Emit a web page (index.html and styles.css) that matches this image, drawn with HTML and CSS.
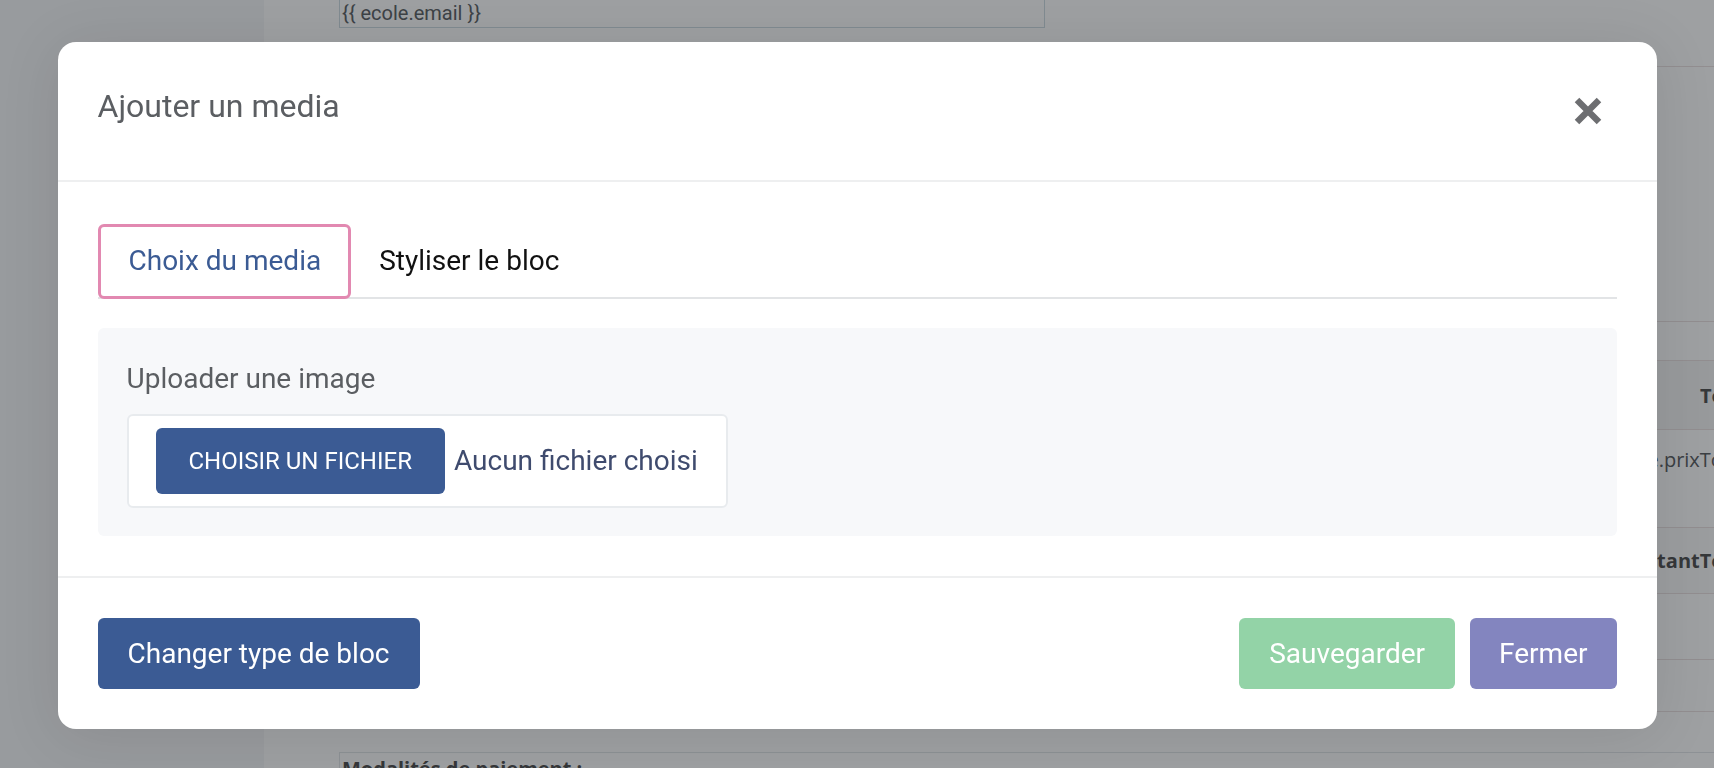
FILE: index.html
```html
<!DOCTYPE html>
<html lang="fr">
<head>
<meta charset="utf-8">
<title>Ajouter un media</title>
<link rel="stylesheet" href="styles.css">
</head>
<body>
<div class="page">
  <aside class="sidebar"></aside>
  <main class="main">
    <div class="email-field">{{ ecole.email }}</div>
    <div class="doc-table">
      <div class="row row-a"></div>
      <div class="row row-b"></div>
      <div class="row row-head"><span></span><span class="cell th">Total</span></div>
      <div class="row row-data"><span></span><span class="cell td">{{ ligne.prixTotal }}</span></div>
      <div class="row row-total"><span></span><span class="cell tb">{{ montantTotal }}</span></div>
      <div class="row row-c"></div>
      <div class="row row-d"></div>
      <div class="row row-e"></div>
    </div>
    <div class="terms-box"><strong>Modalités de paiement :</strong></div>
  </main>
</div>

<div class="backdrop">
  <div class="modal" role="dialog" aria-labelledby="modal-title">
    <div class="modal-header">
      <h5 class="modal-title" id="modal-title">Ajouter un media</h5>
      <button class="close" type="button" aria-label="Close">
        <svg width="28" height="28" viewBox="0 0 28 28" aria-hidden="true">
          <path d="M3 3 L25 25 M25 3 L3 25" stroke="currentColor" stroke-width="6.4" fill="none" stroke-linecap="butt"/>
        </svg>
      </button>
    </div>
    <div class="modal-body">
      <nav class="tabs">
        <a class="tab active">Choix du media</a>
        <a class="tab second">Styliser le bloc</a>
      </nav>
      <div class="tab-pane">
        <label class="pane-label">Uploader une image</label>
        <div class="file-input">
          <span class="file-btn">Choisir un fichier</span>
          <span class="file-name">Aucun fichier choisi</span>
        </div>
      </div>
    </div>
    <div class="modal-footer">
      <button class="btn btn-primary" type="button">Changer type de bloc</button>
      <div class="btn-group">
        <button class="btn btn-success" type="button">Sauvegarder</button>
        <button class="btn btn-close" type="button">Fermer</button>
      </div>
    </div>
  </div>
</div>
</body>
</html>
```

FILE: styles.css
```css
* { box-sizing: border-box; }

html, body {
  margin: 0;
  padding: 0;
  height: 100%;
  overflow: hidden;
}

body {
  font-family: Roboto, "Liberation Sans", Arial, sans-serif;
  background: #ffffff;
}

/* ---------- background page ---------- */
.page {
  display: flex;
  min-height: 768px;
}

.sidebar {
  width: 264px;
  flex: none;
  background: #f6f7f8;
}

.main {
  flex: 1;
  background: #ffffff;
  padding-left: 75px;
  color: #5f6366;
}

.email-field {
  width: 706px;
  height: 28px;
  border: 1px solid #cfdde3;
  border-top: none;
  font-size: 20px;
  line-height: 27px;
  padding-left: 2px;
  color: #62666a;
}

.doc-table {
  margin-top: 38px;
  font-family: "Open Sans", "Liberation Sans", sans-serif;
  font-size: 20px;
}

.row {
  display: grid;
  grid-template-columns: 1fr 220px;
  border-top: 1px solid #ebe2e2;
  white-space: nowrap;
}

.row-a { height: 255px; }
.row-b { height: 39px; }
.row-head { height: 69px; align-items: center; background: #f6f6f6; }
.row-data { height: 98px; padding-top: 16px; }
.row-total { height: 66px; align-items: center; background: #fbfbfb; }
.row-c { height: 66px; }
.row-d { height: 52px; }
.row-e { height: 41px; }

.cell { overflow: visible; }
.th { padding-left: 206px; font-weight: 700; color: #555; }
.td { padding-left: 100px; color: #5f6366; }
.tb { padding-left: 97px; font-weight: 700; color: #555; }

.terms-box {
  border-top: 1px solid #e3e7ea;
  border-left: 1px solid #e3e7ea;
  padding: 2px 0 0 2px;
  font-family: "Open Sans", "Liberation Sans", sans-serif;
  font-size: 20px;
  color: #555;
}

/* ---------- modal ---------- */
.backdrop {
  position: fixed;
  inset: 0;
  background: rgba(4, 10, 16, 0.39);
  display: flex;
  justify-content: center;
  align-items: flex-start;
  padding-top: 42px;
}

.modal {
  width: 1599px;
  background: #ffffff;
  border-radius: 18px;
  box-shadow: 0 6px 60px rgba(0, 0, 0, 0.10);
}

.modal-header {
  display: flex;
  justify-content: space-between;
  align-items: flex-start;
  padding: 40px 55px 50px 40px;
  border-bottom: 2px solid #eeeff0;
}

.modal-title {
  margin: 0;
  font-size: 32px;
  line-height: 48px;
  font-weight: 400;
  color: #5b5e62;
}

.close {
  margin-top: 15px;
  padding: 0;
  border: 0;
  background: none;
  color: #6d6e71;
  width: 28px;
  height: 28px;
  display: block;
}

.close svg { display: block; }

.modal-body {
  padding: 42px 40px 40px;
}

.tabs {
  display: flex;
  border-bottom: 2px solid #e2e4e6;
}

.tab {
  display: block;
  margin-bottom: -2px;
  padding: 13px 28px 14px;
  border: 3px solid transparent;
  border-radius: 6px;
  font-size: 28px;
  line-height: 42px;
  color: #111111;
}

.tab.second {
  padding-left: 25px;
}

.tab.active {
  border-color: #e289b1;
  color: #3b5b94;
  background: #ffffff;
  padding-right: 27px;
}

.tab-pane {
  margin-top: 29px;
  background: #f7f8fa;
  border-radius: 6px;
  padding: 30px 29px 28px;
}

.pane-label {
  display: block;
  font-size: 28px;
  line-height: 42px;
  color: #5b5e62;
  margin-bottom: 14px;
}

.file-input {
  display: inline-flex;
  align-items: center;
  background: #ffffff;
  border: 2px solid #e8ebee;
  border-radius: 6px;
  padding: 12px 28px 12px 27px;
}

.file-btn {
  display: block;
  background: #3b5b94;
  color: #ffffff;
  text-transform: uppercase;
  font-size: 24px;
  line-height: 36px;
  padding: 15px 33px;
  border-radius: 6px;
}

.file-name {
  margin-left: 9px;
  font-size: 28px;
  line-height: 42px;
  color: #3f4b6e;
}

.modal-footer {
  display: flex;
  justify-content: space-between;
  padding: 40px;
  border-top: 2px solid #eeeff0;
}

.btn-group {
  display: flex;
  gap: 15px;
}

.btn {
  font-family: Roboto, "Liberation Sans", Arial, sans-serif;
  font-size: 28px;
  line-height: 43px;
  font-weight: 400;
  padding: 14px 30px;
  border: 0;
  border-radius: 6px;
  color: #ffffff;
}

.btn-primary { background: #3b5b94; }
.btn-success { background: #93d3a7; }
.btn-close { background: #8385bf; padding: 14px 29px; }
```
